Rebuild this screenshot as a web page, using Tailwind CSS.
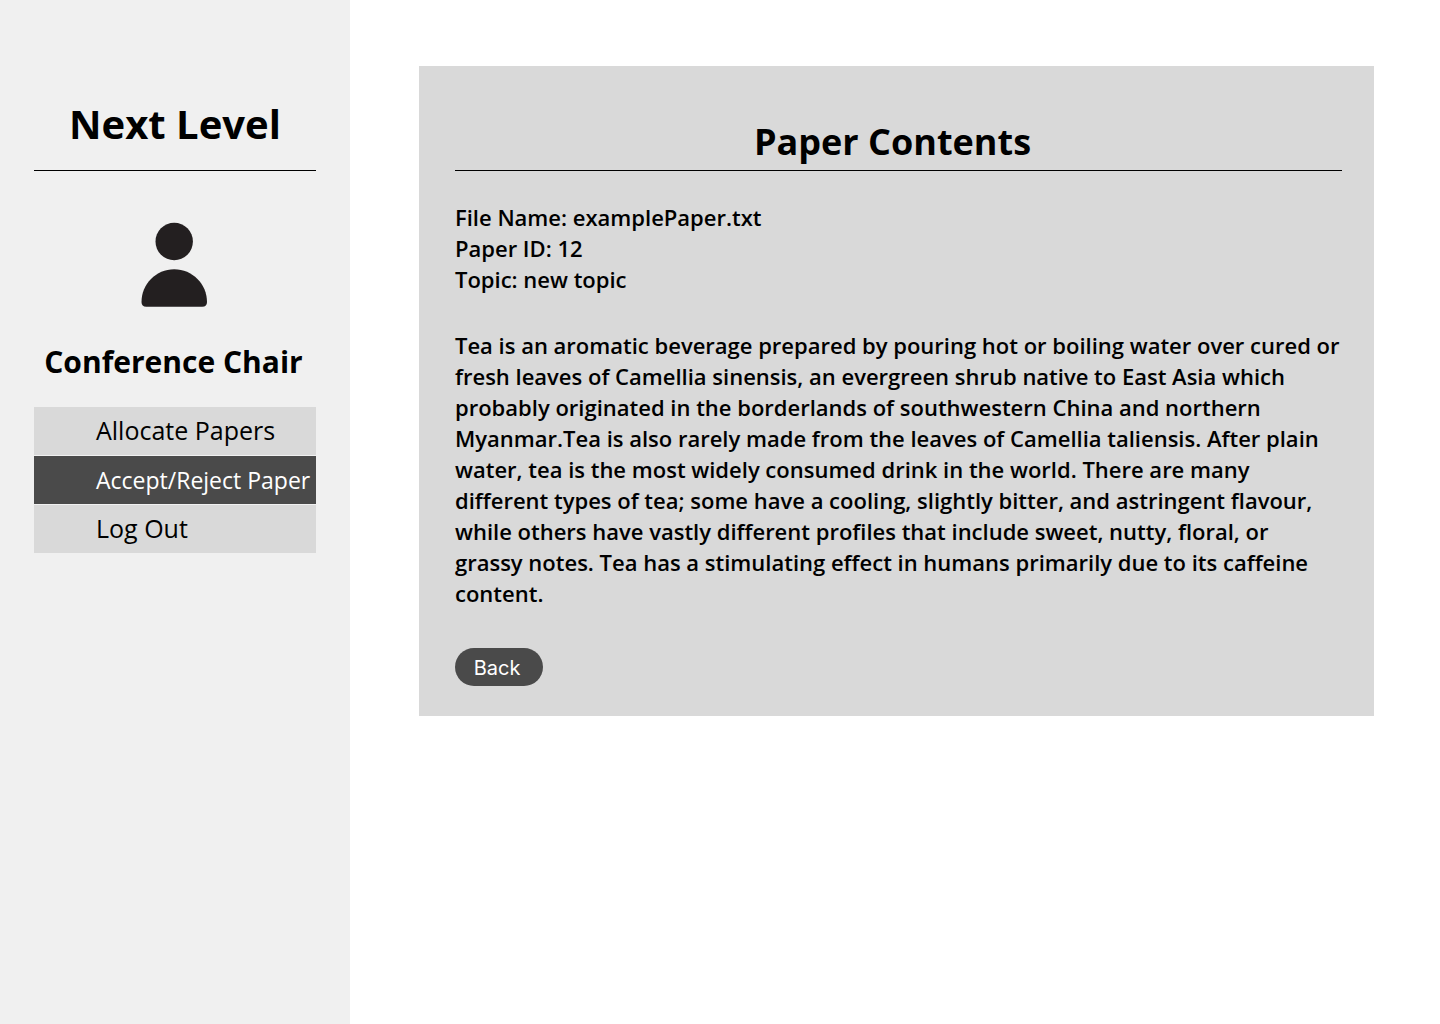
<!DOCTYPE html>
<html lang="en">
<head>
<meta charset="utf-8">
<title>Next Level</title>
<script src="https://cdn.jsdelivr.net/npm/@tailwindcss/browser@4"></script>
</head>
<body class="flex min-h-screen bg-white font-['Open_Sans',sans-serif] text-black">
  <aside class="w-[350px] shrink-0 bg-[#f0f0f0] px-[34px] pt-24">
    <h1 class="border-b border-black pb-[18px] text-center text-[40px] leading-[56px] font-bold">Next Level</h1>
    <div class="flex flex-col items-center pr-[3px]">
      <svg class="mt-[51px] h-[86px] w-[70px]" viewBox="138 222 70 86" fill="#231f20" aria-hidden="true">
        <circle cx="173.200" cy="241.500" r="18.700"/>
        <path d="M140.500 302C140.500 284 155 269.200 173.200 269.200S206 284 206 302Q206 306.800 201.200 306.800H145.300Q140.500 306.800 140.500 302Z"/>
      </svg>
      <h2 class="mt-8 text-center text-[30px] leading-[44px] font-bold">Conference Chair</h2>
    </div>
    <nav class="mt-[23px] flex flex-col gap-px">
      <a href="#" class="flex h-12 items-center bg-[#d9d9d9] pl-[62px] text-[25px] whitespace-nowrap">Allocate Papers</a>
      <a href="#" class="flex h-12 items-center bg-[#4a4a4a] pl-[62px] text-[23px] whitespace-nowrap text-white">Accept/Reject Paper</a>
      <a href="#" class="flex h-12 items-center bg-[#d9d9d9] pl-[62px] text-[25px] whitespace-nowrap">Log Out</a>
    </nav>
  </aside>
  <main class="min-w-0 flex-1 pt-[66px] pr-[66px] pl-[69px]">
    <section class="bg-[#d9d9d9] pt-[50px] pr-8 pb-[30px] pl-9">
      <h2 class="border-b border-black pr-3 pb-0.5 text-center text-4xl leading-[52px] font-bold">Paper Contents</h2>
      <div class="mt-[31px] text-[22px] leading-[31px] font-semibold">
        <p>File Name: examplePaper.txt</p>
        <p>Paper ID: 12</p>
        <p>Topic: new topic</p>
        <p class="mt-[35px] pr-0.5">Tea is an aromatic beverage prepared by pouring hot or boiling water over cured or fresh leaves of Camellia sinensis, an evergreen shrub native to East Asia which probably originated in the borderlands of southwestern China and northern Myanmar.Tea is also rarely made from the leaves of Camellia taliensis. After plain water, tea is the most widely consumed drink in the world. There are many different types of tea; some have a cooling, slightly bitter, and astringent flavour, while others have vastly different profiles that include sweet, nutty, floral, or grassy notes. Tea has a stimulating effect in humans primarily due to its caffeine content.</p>
      </div>
      <button type="button" class="mt-[39px] block h-[38px] w-[88px] rounded-full bg-[#4a4a4a] pt-0.5 pr-1 font-['Inter',sans-serif] text-xl text-white">Back</button>
    </section>
  </main>
</body>
</html>
